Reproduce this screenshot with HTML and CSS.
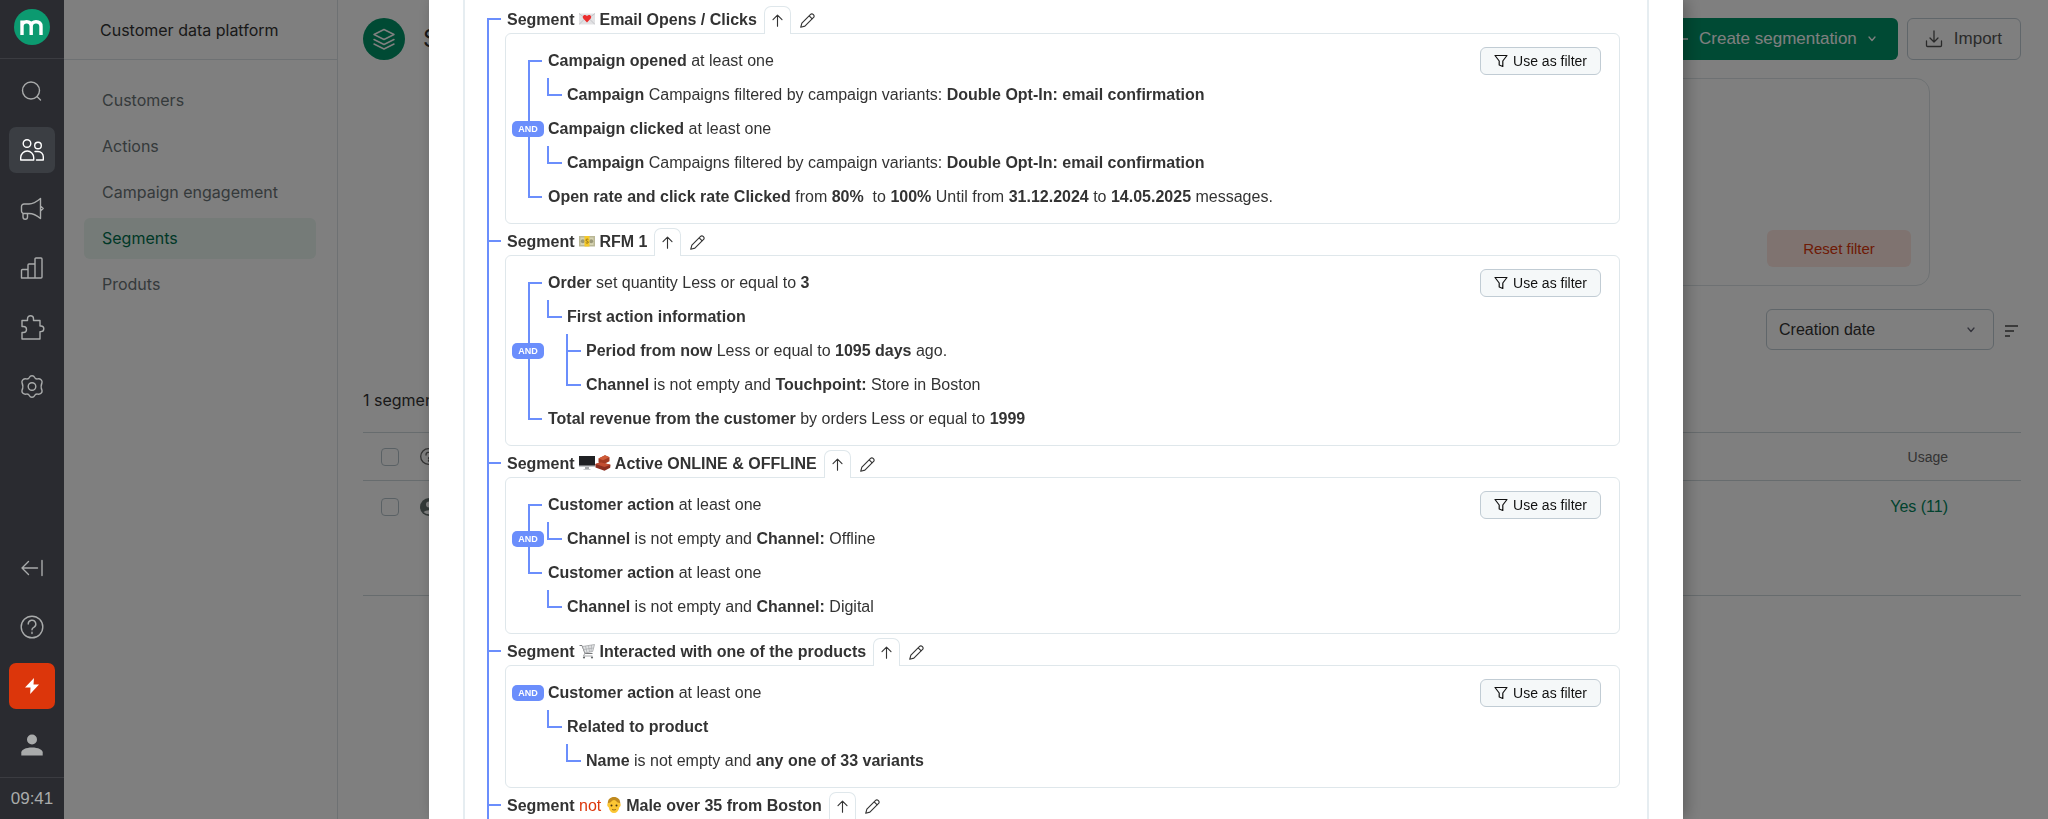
FILE: index.html
```html
<!doctype html>
<html lang="en">
  <head>
    <meta charset="utf-8" />
    <title>Segments</title>
    <meta name="viewport" content="width=device-width, initial-scale=1.0" />
    <link rel="stylesheet" href="styles.css">
  </head>
  <body>
    <svg width="0" height="0" class="sprite">
      <symbol id="i-up" viewBox="0 0 16 16"><path d="M8 14V2.500M3.200 7L8 2.300 12.800 7" /></symbol>
      <symbol id="i-pencil" viewBox="0 0 16 16"><path d="M.8 15.200l1.200-4.400L11.300 1.500a1.900 1.900 0 0 1 2.700 0l.5.500a1.900 1.900 0 0 1 0 2.700L5.200 14zM9.800 3l3.200 3.200" /></symbol>
      <symbol id="i-filter" viewBox="0 0 14 14"><path d="M1 1.500h12L8.800 7v5.500L5.200 11V7z" /></symbol>
    </svg>

    <nav class="rail">
      <a href="#" class="logo" aria-label="Home">
        <svg width="36" height="36" viewBox="0 0 36 36">
          <circle cx="18" cy="18" r="18" fill="#0c9a70" />
          <path d="M8 26V11.500M8 17c0-3 1.800-4.300 4.600-4.300s4.600 1.500 4.600 4.600V26M17.200 17.300c0-3 2-4.600 4.800-4.600s5 1.500 5 4.800V26" fill="none" stroke="#fff" stroke-width="3.400" />
        </svg>
      </a>
      <div class="rail-list">
        <a href="#" class="tile" aria-label="Search"><svg class="icon" viewBox="0 0 24 24"><circle cx="11" cy="11.500" r="8.500" /><path d="M17 17.500l3.500 3.500" /></svg></a>
        <a href="#" class="tile active" aria-label="Customers"><svg class="icon" viewBox="0 0 24 24"><circle cx="7" cy="5.500" r="3.800" /><circle cx="18" cy="7.500" r="3.300" /><path d="M.7 22v-2.500a6.500 6.500 0 0 1 13 0V22zM15 13.500h3a5.300 5.300 0 0 1 5.300 5.300V22H16.500" /></svg></a>
        <a href="#" class="tile" aria-label="Campaigns"><svg class="icon" viewBox="0 0 24 24"><path d="M20.500 1.500v20C17 18.500 14 16.500 9 16.500H4A2.500 2.500 0 0 1 1.500 14V9.500A2.500 2.500 0 0 1 4 7h5c5 0 8-2.500 11.500-5.500zM3 16.500V20a2 2 0 0 0 4.500 0v-3.500M21 9.500l2.200 2-2.200 2" /></svg></a>
        <a href="#" class="tile" aria-label="Reports"><svg class="icon" viewBox="0 0 24 24"><path d="M1.500 22V14.500a1 1 0 0 1 1-1H8V22zM8 22V9a1 1 0 0 1 1-1h6v14zM15 22V3a1 1 0 0 1 1-1h5a1 1 0 0 1 1 1v18a1 1 0 0 1-1 1H2.500a1 1 0 0 1-1-1" /></svg></a>
        <a href="#" class="tile" aria-label="Integrations"><svg class="icon" viewBox="0 0 24 24"><path d="M2 5.500h5.500V3.700a3 3 0 0 1 6 0v1.800H20V11h1a2.800 2.800 0 0 1 0 5.600h-1V24H2v-6.500h1.500a3 3 0 0 0 0-6H2z" /></svg></a>
        <a href="#" class="tile" aria-label="Settings"><svg class="icon" viewBox="0 0 24 24"><circle cx="12" cy="12.500" r="3.800" /><path d="M9.500 3.200C10.300 1.200 13.700 1.200 14.500 3.200c.7 1.500 1.800 2 3.300 1.700 2.500-.5 4.800 1.600 4.200 3.700-1.300 2.800-1.300 5 0 7.800.6 2.100-1.700 4.200-4.200 3.700-1.500-.3-2.600.2-3.300 1.700-.8 2-4.200 2-5 0-.7-1.500-1.800-2-3.300-1.700C3.700 20.600 1.400 18.500 2 16.400c1.300-2.800 1.300-5 0-7.800-.6-2.100 1.700-4.200 4.200-3.700 1.500.3 2.600-.2 3.300-1.700z" /></svg></a>
      </div>
      <div class="rail-list rail-bottom">
        <a href="#" class="tile" aria-label="Collapse"><svg class="icon" viewBox="0 0 24 24"><path d="M17.500 12H2M8.500 5.500L2 12l6.500 6.500M22 4.500v15" /></svg></a>
        <a href="#" class="tile" aria-label="Help"><svg class="icon" viewBox="0 0 24 24"><circle cx="12" cy="12" r="10.800" /><path d="M8.200 9a3.800 3.800 0 1 1 5.600 3.400C12.500 13 12 13.600 12 14.800M12 17.200v1.300" /></svg></a>
        <a href="#" class="tile alert" aria-label="Updates"><svg width="14" height="16" viewBox="0 0 14 16"><path d="M9 0L0 9.500h5.500L5.200 16 14 6.500H8.500z" fill="#fff" /></svg></a>
        <a href="#" class="tile" aria-label="Profile"><svg width="24" height="24" viewBox="0 0 24 24" fill="#a9abab"><circle cx="12" cy="6.500" r="5" /><path d="M1.300 22.500v-3c0-2.800 4.500-5 10.700-5s10.700 2.200 10.700 5v3z" /></svg></a>
      </div>
      <time class="clock">09:41</time>
    </nav>

    <aside class="panel">
      <h2 class="panel-title">Customer data platform</h2>
      <div class="menu">
        <a href="#">Customers</a>
        <a href="#">Actions</a>
        <a href="#">Campaign engagement</a>
        <a href="#" class="current">Segments</a>
        <a href="#">Produts</a>
      </div>
    </aside>

    <main class="main">
      <header class="topbar">
        <svg width="42" height="42" viewBox="0 0 42 42">
          <circle cx="21" cy="21" r="21" fill="#009468" />
          <path d="M21 11.500l10 5-10 5-10-5zM11 21.500l10 5 10-5M11 26l10 5 10-5" fill="none" stroke="#fff" stroke-width="1.500" stroke-linejoin="round" stroke-linecap="round" />
        </svg>
        <h1>Segments</h1>
        <button type="button" class="btn btn-create">
          <svg class="line" width="16" height="16" viewBox="0 0 16 16"><path d="M0 8h16M8 0v16" /></svg>
          Create segmentation
          <svg class="line" width="8" height="6" viewBox="0 0 8 6"><path d="M1 1l3 3.500L7 1" /></svg>
        </button>
        <button type="button" class="btn btn-import">
          <svg class="line" width="18" height="18" viewBox="0 0 18 18"><path d="M9 1v11M5 8l4 4 4-4M1.500 11v4.500a1 1 0 0 0 1 1h13a1 1 0 0 0 1-1V11" /></svg>
          Import
        </button>
      </header>

      <section class="filters">
        <button type="button" class="btn-reset">Reset filter</button>
      </section>

      <div class="sorting">
        <div class="select">
          <select aria-label="Sort by"><option>Creation date</option></select>
          <svg class="line" width="8" height="6" viewBox="0 0 8 6"><path d="M1 1l3 3.500L7 1" /></svg>
        </div>
        <button type="button" class="btn-order" aria-label="Sort order"><svg width="14" height="12" viewBox="0 0 14 12"><path d="M0 1h13M0 6h9M0 11h5" /></svg></button>
      </div>

      <p class="count">1 segment</p>

      <table class="list">
        <tr>
          <th class="check"><input type="checkbox" aria-label="Select all" /></th>
          <th><svg class="line" width="17" height="17" viewBox="0 0 17 17"><circle cx="8.500" cy="8.500" r="7.800" /><path d="M6 7a2.500 2.500 0 1 1 3.500 2.200c-.7.300-1 .7-1 1.300M8.500 12.200v1" /></svg></th>
          <th class="usage">Usage</th>
        </tr>
        <tr class="entry">
          <td class="check"><input type="checkbox" aria-label="Select segment" /></td>
          <td><svg width="18" height="18" viewBox="0 0 18 18"><circle cx="9" cy="9" r="9" fill="#667270" /><circle cx="9" cy="6.500" r="3" fill="#fff" /><path d="M3.500 14a7 4.500 0 0 1 11 0 8 8 0 0 1-11 0z" fill="#fff" /></svg></td>
          <td class="usage"><a href="#">Yes (11)</a></td>
        </tr>
      </table>
    </main>

    <div class="backdrop">
      <div class="modal" role="dialog" aria-label="Segment conditions">
        <ul class="segments">
          <li>
            <div class="head">
              <h3>Segment <svg class="emoji" viewBox="0 0 16 16"><path d="M0 2.500h16v11H0z" fill="#e2e2e4" /><path d="M0 13.500l6-6M16 13.500l-6-6M0 2.500l8 6 8-6" stroke="#c4c4c8" fill="none" /><path d="M8 11.500L4.300 7.500C3 5.800 4.500 3.700 6.200 4c.9.100 1.500.7 1.800 1.300.3-.6.900-1.200 1.800-1.300 1.700-.3 3.200 1.800 1.900 3.500z" fill="#ec2d2d" /></svg> Email Opens / Clicks</h3>
              <button type="button" class="tab" aria-label="Collapse"><svg><use href="#i-up" /></svg></button>
              <button type="button" class="edit" aria-label="Edit"><svg><use href="#i-pencil" /></svg></button>
            </div>
            <div class="card">
              <div class="join"><i></i><span>AND</span><i></i></div>
              <ul class="rules">
                <li><p><b>Campaign opened</b> at least one</p>
                  <ul>
                    <li><p><b>Campaign</b> Campaigns filtered by campaign variants: <b>Double Opt-In: email confirmation</b></p></li>
                  </ul>
                </li>
                <li><p><b>Campaign clicked</b> at least one</p>
                  <ul>
                    <li><p><b>Campaign</b> Campaigns filtered by campaign variants: <b>Double Opt-In: email confirmation</b></p></li>
                  </ul>
                </li>
                <li><p><b>Open rate and click rate Clicked</b> from <b>80%</b>&nbsp; to <b>100%</b> Until from <b>31.12.2024</b> to <b>14.05.2025</b> messages.</p></li>
              </ul>
              <button type="button" class="btn-filter"><svg><use href="#i-filter" /></svg>Use as filter</button>
            </div>
          </li>

          <li>
            <div class="head">
              <h3>Segment <svg class="emoji" viewBox="0 0 16 16"><path d="M0 3h16v10.500H0z" fill="#b9b795" /><path d="M1.500 4.500h13V12h-13z" fill="#d6d3b2" /><circle cx="3.800" cy="8.200" r="2" fill="#9a9878" /><circle cx="12.200" cy="8.200" r="2" fill="#9a9878" /><path d="M5.500 3h5v10.500h-5z" fill="#f6c927" /><path d="M9.300 6.500c-1.500-1-3 .2-2 1.300.8.600 2 .4 2 1.500-.2 1-1.500 1-2.500.4" stroke="#7a5a10" stroke-width=".8" fill="none" /></svg> RFM 1</h3>
              <button type="button" class="tab" aria-label="Collapse"><svg><use href="#i-up" /></svg></button>
              <button type="button" class="edit" aria-label="Edit"><svg><use href="#i-pencil" /></svg></button>
            </div>
            <div class="card">
              <div class="join"><i></i><span>AND</span><i></i></div>
              <ul class="rules">
                <li><p><b>Order</b> set quantity Less or equal to <b>3</b></p>
                  <ul>
                    <li><p><b>First action information</b></p>
                      <ul>
                        <li><p><b>Period from now</b> Less or equal to <b>1095 days</b> ago.</p></li>
                        <li><p><b>Channel</b> is not empty and <b>Touchpoint:</b> Store in Boston</p></li>
                      </ul>
                    </li>
                  </ul>
                </li>
                <li><p><b>Total revenue from the customer</b> by orders Less or equal to <b>1999</b></p></li>
              </ul>
              <button type="button" class="btn-filter"><svg><use href="#i-filter" /></svg>Use as filter</button>
            </div>
          </li>

          <li>
            <div class="head">
              <h3>Segment <svg class="emoji" viewBox="0 0 16 16"><path d="M0 1h16v11H0z" fill="#c4c6c8" /><path d="M0 1h16v9.500H0z" fill="#202124" /><path d="M6 12h4v2H6z" fill="#a9abad" /><path d="M4.500 14h7v1h-7z" fill="#c9cbcd" /></svg><svg class="emoji" viewBox="0 0 16 16"><path d="M3.500 3.500L10 .3l4.500 2v4L8 9.500l-4.500-2z" fill="#a33a22" /><path d="M3.500 3.500L10 .3l4.500 2-6.500 3z" fill="#cf5b38" /><path d="M.3 9L6 7.200l9.500 2.500-.3 3-5.700 3L.5 12.500z" fill="#8c2e20" /><path d="M.3 9L6 7.200l9.500 2.500-6 2.300z" fill="#c24d32" /></svg> Active ONLINE &amp; OFFLINE</h3>
              <button type="button" class="tab" aria-label="Collapse"><svg><use href="#i-up" /></svg></button>
              <button type="button" class="edit" aria-label="Edit"><svg><use href="#i-pencil" /></svg></button>
            </div>
            <div class="card">
              <div class="join join-nested"><i></i><span>AND</span><i></i></div>
              <ul class="rules">
                <li><p><b>Customer action</b> at least one</p>
                  <ul>
                    <li><p><b>Channel</b> is not empty and <b>Channel:</b> Offline</p></li>
                  </ul>
                </li>
                <li><p><b>Customer action</b> at least one</p>
                  <ul>
                    <li><p><b>Channel</b> is not empty and <b>Channel:</b> Digital</p></li>
                  </ul>
                </li>
              </ul>
              <button type="button" class="btn-filter"><svg><use href="#i-filter" /></svg>Use as filter</button>
            </div>
          </li>

          <li>
            <div class="head">
              <h3>Segment <svg class="emoji" viewBox="0 0 16 16"><path d="M.5 2.500h2.500l3 8h7.500" stroke="#77797b" fill="none" /><path d="M3.500 3.500L15.500 1.500l-1.800 7L6 10z" fill="#e3e5e6" stroke="#999b9d" stroke-width=".7" /><path d="M6.500 3l1.500 6.500M9.500 2.500L10.500 9M12.500 2L12 9M4.500 6.500l10-1.500" stroke="#a6a8aa" stroke-width=".7" fill="none" /><path d="M6 10l-1.500 3h9" stroke="#a5a7a9" fill="none" /><circle cx="5" cy="14.500" r="1.100" fill="#66696b" /><circle cx="13" cy="14.500" r="1.100" fill="#66696b" /></svg> Interacted with one of the products</h3>
              <button type="button" class="tab" aria-label="Collapse"><svg><use href="#i-up" /></svg></button>
              <button type="button" class="edit" aria-label="Edit"><svg><use href="#i-pencil" /></svg></button>
            </div>
            <div class="card">
              <div class="join join-single"><span>AND</span></div>
              <ul class="rules">
                <li><p><b>Customer action</b> at least one</p>
                  <ul>
                    <li><p><b>Related to product</b></p>
                      <ul>
                        <li><p><b>Name</b> is not empty and <b>any one of 33 variants</b></p></li>
                      </ul>
                    </li>
                  </ul>
                </li>
              </ul>
              <button type="button" class="btn-filter"><svg><use href="#i-filter" /></svg>Use as filter</button>
            </div>
          </li>

          <li>
            <div class="head">
              <h3>Segment <span class="not">not</span> <svg class="emoji" viewBox="0 0 16 16"><path d="M1.800 7C1.500 2 4.500 0 8 0s6.500 2 6.200 7z" fill="#c08a1e" /><path d="M2.500 6c3 0 3-3 5.500-3s2.500 3 5.500 3c1.700.5 1.500 3.500-.1 4C12.500 14 10.800 16 8 16s-4.500-2-5.400-6C1 9.500.8 6.500 2.500 6z" fill="#fcc734" /><circle cx="5.500" cy="8.500" r="1" fill="#4a3312" /><circle cx="10.500" cy="8.500" r="1" fill="#4a3312" /><path d="M6 12.500q2 1 4 0" stroke="#a07318" fill="none" /></svg> Male over 35 from Boston</h3>
              <button type="button" class="tab" aria-label="Collapse"><svg><use href="#i-up" /></svg></button>
              <button type="button" class="edit" aria-label="Edit"><svg><use href="#i-pencil" /></svg></button>
            </div>
          </li>
        </ul>
      </div>
    </div>
  </body>
</html>
```

FILE: styles.css
```css
* {
  box-sizing: border-box;
}

body {
  margin: 0;
  height: 100vh;
  display: flex;
  overflow: hidden;
  background-color: #fff;
  color: #333;
  font-family: 'Liberation Sans', Arial, sans-serif;
  font-size: 16px;
}

h1,
h2,
h3,
p,
ul {
  margin: 0;
  padding: 0;
}

ul {
  list-style: none;
}

a {
  color: inherit;
  text-decoration: none;
}

button {
  font-family: inherit;
  cursor: pointer;
}

.sprite {
  position: absolute;
}

.line {
  fill: none;
  stroke: currentColor;
  stroke-width: 1.3;
  stroke-linecap: round;
  stroke-linejoin: round;
}

/* dark rail */
.rail {
  width: 64px;
  flex: none;
  display: flex;
  flex-direction: column;
  background-color: #2a2b30;
  color: #a9abab;
}

.logo {
  height: 59px;
  padding: 9px 14px;
  border-bottom: 1px solid #3b3c41;
}

.rail-list {
  display: flex;
  flex-direction: column;
  align-items: center;
  gap: 13px;
  padding: 9px 0;
}

.rail-bottom {
  margin-top: auto;
}

.tile {
  width: 46px;
  height: 46px;
  display: flex;
  align-items: center;
  justify-content: center;
  border-radius: 7px;
}

.tile.active {
  background-color: #3b3e43;
  color: #fff;
}

.tile.alert {
  background-color: #dc360b;
}

.icon {
  width: 24px;
  height: 24px;
  overflow: visible;
  fill: none;
  stroke: currentColor;
  stroke-width: 1.4;
  stroke-linecap: round;
  stroke-linejoin: round;
}

.clock {
  height: 42px;
  border-top: 1px solid #3b3c41;
  font-size: 17px;
  line-height: 42px;
  text-align: center;
}

/* section menu */
.panel {
  width: 274px;
  flex: none;
  border-right: 1px solid #dce3e6;
  font-family: Inter, sans-serif;
}

.panel-title {
  height: 60px;
  padding-left: 36px;
  border-bottom: 1px solid #dce3e6;
  font-size: 16px;
  font-weight: 400;
  line-height: 60px;
}

.menu {
  display: flex;
  flex-direction: column;
  gap: 5px;
  padding: 20px 21px 0 20px;
}

.menu a {
  padding-left: 18px;
  border-radius: 6px;
  color: #6b7477;
  line-height: 41px;
}

.menu .current {
  background-color: #eaf6f0;
  color: #00714e;
}

/* page */
.main {
  flex: 1;
  padding: 18px 27px 0 25px;
}

.topbar {
  display: flex;
  align-items: center;
  gap: 9px;
}

.topbar h1 {
  flex: 1;
  padding-left: 9px;
  font: 24px/42px Inter, sans-serif;
}

.btn {
  height: 42px;
  display: flex;
  align-items: center;
  gap: 11px;
  border-radius: 6px;
  font-size: 17px;
}

.btn-create {
  padding: 0 22px 0 20px;
  border: 0;
  background-color: #009468;
  color: #fff;
}

.btn-import {
  padding: 0 18px 0 17px;
  border: 1px solid #c1ccd4;
  background-color: #fff;
  color: #555;
}

.filters {
  height: 208px;
  margin: 18px 91px 23px 91px;
  padding: 18px;
  display: flex;
  align-items: flex-end;
  justify-content: flex-end;
  border: 1px solid #dce3e6;
  border-radius: 14px;
}

.btn-reset {
  width: 144px;
  height: 37px;
  border: 0;
  border-radius: 6px;
  background-color: #ffe6e0;
  color: #dc360b;
  font-size: 15px;
}

.sorting {
  display: flex;
  align-items: center;
  justify-content: flex-end;
  gap: 11px;
}

.select {
  width: 228px;
  height: 41px;
  display: grid;
  align-items: center;
  border: 1px solid #c1ccd4;
  border-radius: 6px;
}

.select > * {
  grid-area: 1 / 1;
}

.select select {
  height: 39px;
  padding: 0 12px;
  border: 0;
  background: none;
  color: #333;
  font: inherit;
  appearance: none;
}

.select svg {
  justify-self: end;
  margin-right: 18px;
  color: #667;
  pointer-events: none;
}

.btn-order {
  width: 16px;
  padding: 2px 0 0;
  border: 0;
  background: none;
}

.btn-order svg {
  display: block;
}

.btn-order path {
  stroke: #777;
  stroke-width: 2;
}

.count {
  padding: 40px 0 22px;
  font-family: Inter, sans-serif;
  line-height: 20px;
}

.list {
  width: 100%;
  border-collapse: collapse;
}

.list tr {
  height: 48px;
  border-top: 1px solid #cfd8dc;
}

.list .entry {
  height: 115px;
  border-bottom: 1px solid #cfd8dc;
  vertical-align: top;
}

.list th,
.list td {
  padding: 0;
  text-align: left;
  font-weight: 400;
}

.list .entry td {
  padding-top: 17px;
}

.list svg,
.list input {
  display: block;
}

.list .line {
  color: #666;
}

.list .check {
  width: 57px;
  padding-left: 18px;
}

.list input {
  width: 18px;
  height: 18px;
  margin: 0;
  border: 1px solid #b5c2ca;
  border-radius: 4px;
  appearance: none;
}

.list .usage {
  padding-right: 73px;
  text-align: right;
  color: #666;
  font-size: 14px;
}

.list .usage a {
  color: #00855c;
  font-size: 16px;
}

/* modal */
.backdrop {
  position: fixed;
  inset: 0 0 0 64px;
  display: flex;
  justify-content: center;
  background-color: rgba(0, 0, 0, 0.5);
}

.modal {
  width: 1254px;
  max-width: 90%;
  padding: 0 34px;
  background-color: #fff;
  box-shadow: 4px 0 14px rgba(0, 0, 0, 0.25);
}

.segments {
  height: 100%;
  overflow: hidden;
  padding: 1px 27px 0 22px;
  border: solid #e6edf1;
  border-width: 0 2px;
}

.segments > li {
  padding-left: 18px;
  background: linear-gradient(#6b8efc, #6b8efc) no-repeat 0 0 / 2px 100%;
}

.segments > li:first-child {
  padding-top: 1px;
  background-position: 0 17px;
}

.head {
  height: 31px;
  margin-left: -18px;
  padding: 4px 0 0 20px;
  display: flex;
  background: linear-gradient(#6b8efc, #6b8efc) no-repeat 0 16px / 14px 2px;
}

.head h3 {
  font-size: 16px;
  line-height: 27px;
}

.head .not {
  color: #dc360b;
  font-weight: 400;
}

.emoji {
  width: 16px;
  height: 16px;
  vertical-align: -2px;
}

.tab,
.edit {
  height: 28px;
  padding: 0;
  border: 0;
  background: none;
}

/* covers the top border of the card below */
.tab {
  width: 27px;
  margin: 0 9px 0 7px;
  z-index: 1;
  border: solid #dfe7eb;
  border-width: 1px 1px 0;
  border-radius: 7px 7px 0 0;
  background-color: #fff;
}

.head button svg {
  width: 15px;
  height: 15px;
  display: block;
  margin: auto;
  fill: none;
  stroke: #333;
  stroke-width: 1.2;
  stroke-linecap: round;
  stroke-linejoin: round;
}

.card {
  display: flex;
  align-items: flex-start;
  padding: 10px 18px 9px 6px;
  border: 1px solid #dfe7eb;
  border-radius: 6px;
}

.join {
  align-self: stretch;
  width: 32px;
  margin: 16px 4px 16px 0;
  display: flex;
  flex-direction: column;
}

.join-nested {
  margin-bottom: 50px;
}

.join-single {
  margin-top: 9px;
}

.join i {
  flex: 1;
  margin: 0 2px 0 16px;
  border: solid #6b8efc;
  border-width: 2px 0 0 2px;
}

.join i:last-child {
  border-width: 0 0 2px 2px;
}

.join span {
  border-radius: 5px;
  background-color: #6b8efc;
  color: #fff;
  font-size: 9px;
  font-weight: 700;
  line-height: 16px;
  text-align: center;
}

.rules {
  flex: 1;
}

.rules p {
  line-height: 34px;
}

.rules ul {
  margin-left: -1px;
}

.rules ul li {
  padding-left: 20px;
  background:
    linear-gradient(#6b8efc, #6b8efc) no-repeat 0 0 / 2px 100%,
    linear-gradient(#6b8efc, #6b8efc) no-repeat 0 16px / 15px 2px;
}

.rules ul li:last-child {
  background:
    linear-gradient(#6b8efc, #6b8efc) no-repeat 0 0 / 2px 18px,
    linear-gradient(#6b8efc, #6b8efc) no-repeat 0 16px / 15px 2px;
}

.btn-filter {
  height: 28px;
  margin-top: 3px;
  padding: 0 13px;
  display: flex;
  align-items: center;
  gap: 5px;
  border: 1px solid #c1ccd4;
  border-radius: 6px;
  background-color: #f5f8f9;
  color: #111;
  font-size: 14px;
}

.btn-filter svg {
  width: 14px;
  height: 14px;
  fill: none;
  stroke: #111;
  stroke-width: 1.2;
  stroke-linejoin: round;
}
```
